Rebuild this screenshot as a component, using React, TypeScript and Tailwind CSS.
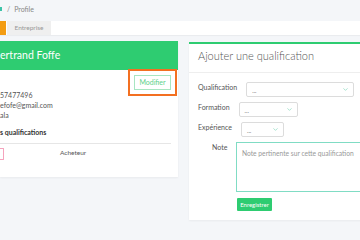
import { ChevronDown } from 'lucide-react'

const SELECTS = [
  { label: 'Qualification', width: 'w-[108px]' },
  { label: 'Formation', width: 'w-[59px]' },
  { label: 'Expérience', width: 'w-[43px]' }
]

function FakeSelect({ width }: { width: string }) {
  return (
    <div className={`${width} h-[15px] shrink-0 border border-[#dcdcdc] rounded-[2px] bg-white flex items-center justify-between pl-[5px] pr-[4px]`}>
      <span className="text-[6px] leading-none text-[#555] pt-[3px]">...</span>
      <ChevronDown size={7} strokeWidth={2} className="text-[#6fd1b0]" />
    </div>
  )
}

export default function App() {
  return (
    <div className="w-[360px] h-[240px] overflow-hidden bg-[#f4f6f9] font-['Lato',sans-serif]">
      {/* Breadcrumb */}
      <div className="h-[21px] pb-[3px] flex items-center text-[7px] text-[#888]">
        <span className="w-[2px] h-[4px] bg-[#3cc3a8]" />
        <span className="ml-[5px]">/</span>
        <span className="ml-[4px]">Profile</span>
      </div>

      {/* Tabs */}
      <div className="h-[14px] bg-white flex shadow-[0_1px_1px_rgba(0,0,0,0.04)]">
        <div className="w-[6px] bg-[#f39c12]" />
        <div className="ml-[1px] w-[44px] bg-[#efefef] flex items-center justify-center text-[6.5px] text-[#999]">
          Entreprise
        </div>
      </div>

      <div className="mt-[6px] flex items-start gap-[11px]">
        {/* Profile card */}
        <div className="w-[178px] shrink-0 bg-white shadow-[0_1px_2px_rgba(0,0,0,0.05)]">
          <div className="h-[29px] bg-[#2ecc71] flex items-center text-[10.5px] text-white">
            ertrand Foffe
          </div>
          <div className="pt-[5px] pr-[7px] pb-[17px]">
            <div className="flex justify-end">
              <button className="w-[37px] h-[15px] border border-[#a8e6c1] text-[7px] text-[#5fd08a] bg-white outline-2 outline-[#f37021] outline-offset-4">
                Modifier
              </button>
            </div>
            <div className="text-[7px] leading-[10px] text-[#555]">
              <p>57477496</p>
              <p>efofe@gmail.com</p>
              <p>ala</p>
            </div>
            <p className="mt-[7px] text-[7px] leading-[10px] font-bold text-[#333]">s qualifications</p>
            <div className="mt-[6px] border-t border-[#e6e6e6]" />
            <div className="mt-[4px] flex items-start">
              <div className="w-[4px] h-[12px] border-y border-r border-[#f5a3bd] rounded-r-[1px]" />
              <span className="ml-[56px] text-[6.5px] leading-[10px] text-[#555]">Acheteur</span>
            </div>
          </div>
        </div>

        {/* Add qualification card */}
        <div className="w-[200px] shrink-0 mt-[1px] bg-white border-t-2 border-[#2ecc71] shadow-[0_1px_2px_rgba(0,0,0,0.05)]">
          <div className="h-[29px] pb-[3px] px-[9px] flex items-center text-[11px] font-light text-[#555] border-b border-[#eee]">
            Ajouter une qualification
          </div>
          <div className="px-[9px] pt-[9px] pb-[9px]">
            <div className="flex flex-col gap-[5px]">
              {SELECTS.map((s) => (
                <div key={s.label} className="flex items-start gap-[9px]">
                  <span className="text-[7px] leading-[10px] text-[#555]">{s.label}</span>
                  <FakeSelect width={s.width} />
                </div>
              ))}
              <div className="flex items-start">
                <span className="ml-[14px] w-[24px] shrink-0 text-[7px] leading-[10px] text-[#555]">Note</span>
                <textarea
                  placeholder="Note pertinente sur cette qualification"
                  className="block w-[144px] shrink-0 h-[50px] resize-none border border-[#80dcc4] px-[5px] py-[5px] text-[6.7px] leading-[10px] text-[#555] placeholder:text-[#999] outline-none"
                />
              </div>
            </div>
            <button className="block mt-[6px] ml-[39px] w-[35px] h-[13px] bg-[#2ecc71] text-white text-[6px] rounded-[1px]">
              Enregistrer
            </button>
          </div>
        </div>
      </div>
    </div>
  )
}
